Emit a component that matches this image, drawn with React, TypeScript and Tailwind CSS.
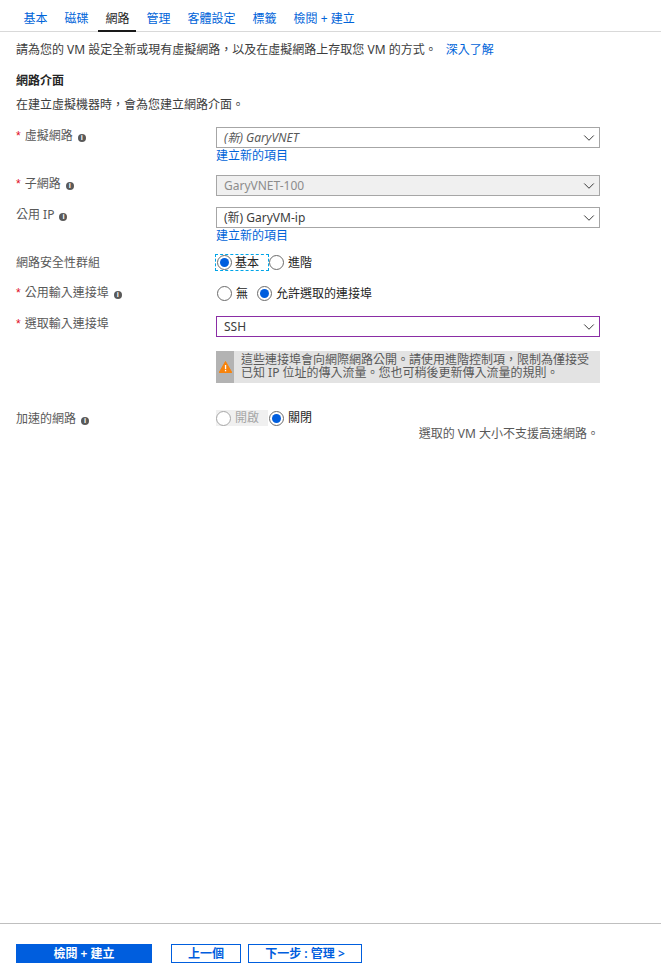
import React from 'react';
import { ChevronDown } from 'lucide-react';

const tabs = ['基本', '磁碟', '網路', '管理', '客體設定', '標籤', '檢閱 + 建立'];
const comma = '\uFF0C';

function Info() {
  return (
    <span className="ml-[5px] inline-flex h-2 w-2 items-center justify-center rounded-full bg-[#595959] align-[0px] text-[7px] leading-none font-bold text-white">
      i
    </span>
  );
}

function Label({ text, required, info }: { text: string; required?: boolean; info?: boolean }) {
  return (
    <div className="text-[#595959]">
      {required && <span className="mr-[4px] font-['Liberation_Sans',sans-serif] text-[#e00b1c]">*</span>}
      {text}
      {info && <Info />}
    </div>
  );
}

function Select({
  value,
  italic,
  disabled,
  focused,
}: {
  value: string;
  italic?: boolean;
  disabled?: boolean;
  focused?: boolean;
}) {
  return (
    <div
      className={`flex h-[21px] items-center justify-between border pr-[1px] pl-[7px] ${
        focused ? 'border-[#8a2da5]' : 'border-[#a6a6a6]'
      } ${disabled ? 'bg-[#f0f0f0] text-[#8c8c8c]' : 'bg-white'} ${italic ? 'text-[#595959] italic' : 'text-[#3c3c3c]'}`}
    >
      <span>{value}</span>
      <ChevronDown size={18} strokeWidth={1.2} className="text-[#252525]" />
    </div>
  );
}

function CreateLink() {
  return <div className="mt-[1px] h-[14px] leading-[14px] text-[#0064d9]">建立新的項目</div>;
}

function Radio({ checked, disabled }: { checked?: boolean; disabled?: boolean }) {
  return (
    <span
      className={`flex h-[15px] w-[15px] shrink-0 items-center justify-center rounded-full border bg-white ${
        disabled ? 'border-[#a6a6a6]' : 'border-[#6b6b6b]'
      }`}
    >
      {checked && <span className="h-[9px] w-[9px] rounded-full bg-[#005ede]" />}
    </span>
  );
}

export default function App() {
  return (
    <div
      lang="zh-TW"
      className="flex h-[967px] flex-col bg-white font-['Noto_Sans','Noto_Sans_CJK_TC',sans-serif] text-[12px] leading-[16px] text-[#3c3c3c]"
    >
      {/* Tabs */}
      <div className="flex h-[16px] box-content border-b border-[#d9d9d9] pt-[11px] pb-[4px] pl-[15px]">
        {tabs.map((tab) => (
          <div
            key={tab}
            className={`relative px-[8.5px] whitespace-nowrap ${tab === '網路' ? 'text-[#252525]' : 'text-[#0064d9]'}`}
          >
            {tab}
            {tab === '網路' && <div className="absolute right-[2px] -bottom-[5px] left-[1px] h-[2px] bg-[#1a1a1a]" />}
          </div>
        ))}
      </div>

      <div className="mt-[10px] ml-[16px] flex">
        <span>請為您的 VM 設定全新或現有虛擬網路{comma}以及在虛擬網路上存取您 VM 的方式。</span>
        <span className="ml-[9px] text-[#0064d9]">深入了解</span>
      </div>

      <div className="mt-[15px] ml-[16px] font-semibold text-[#252525]">網路介面</div>
      <div className="mt-[8px] ml-[16px]">在建立虛擬機器時{comma}會為您建立網路介面。</div>

      {/* Form */}
      <div className="mt-[14px] ml-[16px] grid w-[584px] grid-cols-[200px_384px]">
        <div className="pt-[1px]">
          <Label text="虛擬網路" required info />
        </div>
        <div>
          <Select value="(新) GaryVNET" italic />
          <CreateLink />
        </div>

        <div className="mt-[12px] pt-[1px]">
          <Label text="子網路" required info />
        </div>
        <div className="mt-[12px]">
          <Select value="GaryVNET-100" disabled />
        </div>

        <div className="mt-[11px]">
          <Label text="公用 IP" info />
        </div>
        <div className="mt-[11px]">
          <Select value="(新) GaryVM-ip" />
          <CreateLink />
        </div>

        <div className="mt-[11px] pt-[1px]">
          <Label text="網路安全性群組" />
        </div>
        <div className="mt-[11px] flex h-[17px] items-center text-[#252525]">
          <div className="-ml-[1px] flex h-[17px] w-[54px] items-center gap-[3px] border border-dashed border-[#00a4e8] pl-[1px]">
            <Radio checked />
            <span>基本</span>
          </div>
          <Radio />
          <span className="ml-[4px]">進階</span>
        </div>

        <div className="mt-[13px] pt-[1px]">
          <Label text="公用輸入連接埠" required info />
        </div>
        <div className="mt-[13px] flex h-[19px] items-center pl-[1px] text-[#252525]">
          <Radio />
          <span className="ml-[4px]">無</span>
          <span className="ml-[9px]">
            <Radio checked />
          </span>
          <span className="ml-[4px]">允許選取的連接埠</span>
        </div>

        <div className="mt-[13px]">
          <Label text="選取輸入連接埠" required />
        </div>
        <div className="mt-[13px]">
          <Select value="SSH" focused />
          <div className="mt-[14px] flex h-[32px] bg-[#e3e3e3]">
            <div className="flex w-[18px] items-center justify-center bg-[#b3b3b3]">
              <svg width="13" height="12" viewBox="0 0 13 12">
                <path d="M6.5 0.5 12.8 11.5H0.2Z" fill="#f7830c" stroke="#f7830c" strokeLinejoin="round" />
                <rect x="5.9" y="4" width="1.3" height="4.2" fill="#fff" />
                <rect x="5.9" y="9" width="1.3" height="1.3" fill="#fff" />
              </svg>
            </div>
            <div className="pt-[2px] pl-[7px] text-[12px] leading-[13px] whitespace-nowrap text-[#595959]">
              這些連接埠會向網際網路公開。請使用進階控制項{comma}限制為僅接受
              <br />
              已知 IP 位址的傳入流量。您也可稍後更新傳入流量的規則。
            </div>
          </div>
        </div>

        <div className="mt-[27px] pt-[1px]">
          <Label text="加速的網路" info />
        </div>
        <div className="mt-[27px]">
          <div className="flex h-[16px] items-center">
            <div className="flex h-[16px] w-[52px] items-center gap-[4px] bg-[#f0f0f0] text-[#a6a6a6]">
              <Radio disabled />
              <span>開啟</span>
            </div>
            <span className="ml-[1px]">
              <Radio checked />
            </span>
            <span className="ml-[4px] text-[#252525]">關閉</span>
          </div>
          <div className="pr-[1px] text-right text-[#595959]">選取的 VM 大小不支援高速網路。</div>
        </div>
      </div>

      {/* Footer */}
      <div className="mt-auto flex h-[44px] items-start border-t border-[#bfbfbf] pt-[20px] pl-[16px] font-semibold">
        <button className="h-[19px] w-[136px] bg-[#005ede] text-[12px] leading-none text-white">檢閱 + 建立</button>
        <button className="ml-[19px] h-[19px] w-[70px] border border-[#005ede] bg-white text-[12px] leading-none text-[#005ede]">
          上一個
        </button>
        <button className="ml-[7px] h-[19px] w-[114px] border border-[#005ede] bg-white text-[12px] leading-none text-[#005ede]">
          下一步 : 管理 &gt;
        </button>
      </div>
    </div>
  );
}
